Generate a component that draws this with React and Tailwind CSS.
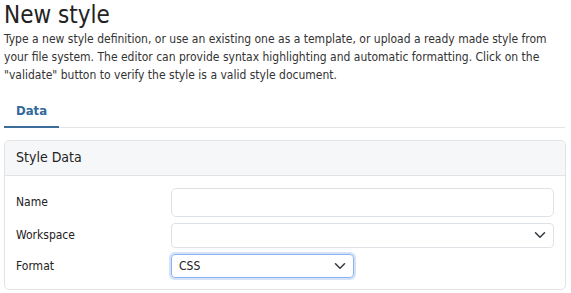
import React from 'react';

function Chevron() {
    return (
        <svg width="12" height="12" viewBox="0 0 16 16" className="text-[#343a40]">
            <path d="M2 5l6 6 6-6" fill="none" stroke="currentColor" strokeWidth="2" strokeLinecap="round" strokeLinejoin="round" />
        </svg>
    );
}

function Row({ label, children }) {
    return (
        <div className="flex items-center">
            <label className="w-[155px] shrink-0 text-[12px] text-[#222]">{label}</label>
            {children}
        </div>
    );
}

export default function App() {
    return (
        <div
            className="w-[571px] h-[293px] bg-white px-[4px] overflow-hidden text-[#222]"
            style={{ fontFamily: '"DejaVu Sans Condensed", "DejaVu Sans", sans-serif' }}
        >
            <h1 className="text-[24px] leading-[30px] text-[#222]">New style</h1>
            <p className="text-[12px] leading-[18px] text-[#333] pr-[20px]">
                Type a new style definition, or use an existing one as a template, or upload a ready made style from your file system. The editor can provide syntax highlighting and automatic formatting. Click on the "validate" button to verify the style is a valid style document.
            </p>

            <div className="mt-[17px] flex border-b border-[#e3e4e6] mr-[2px]">
                <div className="px-[12px] pb-[5px] border-b-2 border-[#3a6d99] -mb-[1px] text-[13px] font-bold text-[#32689a]">
                    Data
                </div>
            </div>

            <div className="mt-[12px] mr-[1px] border border-[#e1e3e6] rounded-[5px] overflow-hidden">
                <div className="h-[35px] bg-[#f6f7f9] border-b border-[#e1e3e6] flex items-center px-[11px] text-[14px] text-[#222]">
                    Style Data
                </div>
                <div className="px-[11px] pt-[12px] pb-[11px] flex flex-col gap-[6px]">
                    <Row label="Name">
                        <div className="w-[383px] h-[29px] border border-[#dee2e6] rounded-[5px]" />
                    </Row>
                    <Row label="Workspace">
                        <div className="w-[383px] h-[25px] border border-[#dee2e6] rounded-[4px] flex items-center justify-end pr-[7px]">
                            <Chevron />
                        </div>
                    </Row>
                    <Row label="Format">
                        <div className="w-[183px] h-[24px] border border-[#8db4ee] rounded-[4px] ring-[2px] ring-[#d3e2f7] flex items-center justify-between pl-[7px] pr-[7px] text-[12px] text-[#222]">
                            CSS
                            <Chevron />
                        </div>
                    </Row>
                </div>
            </div>
        </div>
    );
}
